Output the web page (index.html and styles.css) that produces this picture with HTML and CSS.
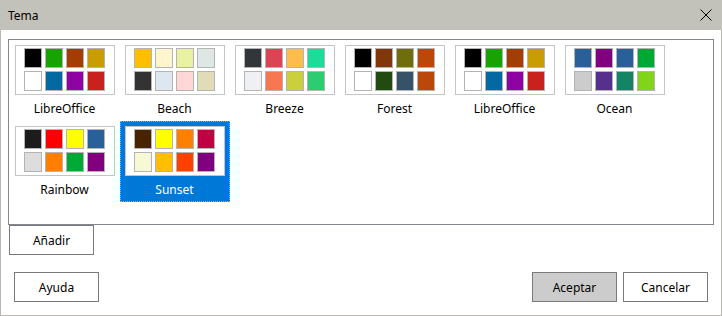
FILE: index.html
```html
<!DOCTYPE html>
<html lang="es">
<head>
    <meta charset="UTF-8">
    <title>Tema</title>
    <link rel="stylesheet" href="styles.css">
</head>
<body>
    <div class="dialog">
        <div class="titlebar">
            <span class="title">Tema</span>
            <svg class="close" width="12" height="12" viewBox="0 0 12 12">
                <path d="M0.5 0.5 L11.5 11.5 M11.5 0.5 L0.5 11.5" stroke="#000" stroke-width="1" fill="none"/>
            </svg>
        </div>

        <div class="content">
            <div class="theme-view">
                <div class="theme">
                    <div class="preview">
                        <span class="sw" style="background:#000000"></span>
                        <span class="sw" style="background:#18a303"></span>
                        <span class="sw" style="background:#a33e03"></span>
                        <span class="sw" style="background:#c99c00"></span>
                        <span class="sw" style="background:#ffffff"></span>
                        <span class="sw" style="background:#0369a3"></span>
                        <span class="sw" style="background:#8e03a3"></span>
                        <span class="sw" style="background:#c9211e"></span>
                    </div>
                    <div class="name">LibreOffice</div>
                </div>
                <div class="theme">
                    <div class="preview">
                        <span class="sw" style="background:#ffbf00"></span>
                        <span class="sw" style="background:#fff5ce"></span>
                        <span class="sw" style="background:#e8f2a1"></span>
                        <span class="sw" style="background:#dee6e6"></span>
                        <span class="sw" style="background:#333333"></span>
                        <span class="sw" style="background:#dee6ef"></span>
                        <span class="sw" style="background:#ffd7d7"></span>
                        <span class="sw" style="background:#e0dcb8"></span>
                    </div>
                    <div class="name">Beach</div>
                </div>
                <div class="theme">
                    <div class="preview">
                        <span class="sw" style="background:#31363b"></span>
                        <span class="sw" style="background:#da4453"></span>
                        <span class="sw" style="background:#fdbc4b"></span>
                        <span class="sw" style="background:#1cdc9a"></span>
                        <span class="sw" style="background:#eff0f1"></span>
                        <span class="sw" style="background:#f67752"></span>
                        <span class="sw" style="background:#c9d03a"></span>
                        <span class="sw" style="background:#2ecc71"></span>
                    </div>
                    <div class="name">Breeze</div>
                </div>
                <div class="theme">
                    <div class="preview">
                        <span class="sw" style="background:#000000"></span>
                        <span class="sw" style="background:#813709"></span>
                        <span class="sw" style="background:#706e0c"></span>
                        <span class="sw" style="background:#bb480a"></span>
                        <span class="sw" style="background:#ffffff"></span>
                        <span class="sw" style="background:#224b12"></span>
                        <span class="sw" style="background:#355269"></span>
                        <span class="sw" style="background:#bb480a"></span>
                    </div>
                    <div class="name">Forest</div>
                </div>
                <div class="theme">
                    <div class="preview">
                        <span class="sw" style="background:#000000"></span>
                        <span class="sw" style="background:#18a303"></span>
                        <span class="sw" style="background:#a33e03"></span>
                        <span class="sw" style="background:#c99c00"></span>
                        <span class="sw" style="background:#ffffff"></span>
                        <span class="sw" style="background:#0369a3"></span>
                        <span class="sw" style="background:#8e03a3"></span>
                        <span class="sw" style="background:#c9211e"></span>
                    </div>
                    <div class="name">LibreOffice</div>
                </div>
                <div class="theme">
                    <div class="preview">
                        <span class="sw" style="background:#2a6099"></span>
                        <span class="sw" style="background:#800080"></span>
                        <span class="sw" style="background:#2a6099"></span>
                        <span class="sw" style="background:#00a933"></span>
                        <span class="sw" style="background:#cccccc"></span>
                        <span class="sw" style="background:#55308d"></span>
                        <span class="sw" style="background:#158466"></span>
                        <span class="sw" style="background:#81d41a"></span>
                    </div>
                    <div class="name">Ocean</div>
                </div>
                <div class="theme">
                    <div class="preview">
                        <span class="sw" style="background:#1c1c1c"></span>
                        <span class="sw" style="background:#ff0000"></span>
                        <span class="sw" style="background:#ffff00"></span>
                        <span class="sw" style="background:#2a6099"></span>
                        <span class="sw" style="background:#dddddd"></span>
                        <span class="sw" style="background:#ff8000"></span>
                        <span class="sw" style="background:#00a933"></span>
                        <span class="sw" style="background:#800080"></span>
                    </div>
                    <div class="name">Rainbow</div>
                </div>
                <div class="theme selected">
                    <div class="preview">
                        <span class="sw" style="background:#472300"></span>
                        <span class="sw" style="background:#ffff00"></span>
                        <span class="sw" style="background:#ff8000"></span>
                        <span class="sw" style="background:#bf0041"></span>
                        <span class="sw" style="background:#f6f9d4"></span>
                        <span class="sw" style="background:#ffbf00"></span>
                        <span class="sw" style="background:#ff4000"></span>
                        <span class="sw" style="background:#800080"></span>
                    </div>
                    <div class="name">Sunset</div>
                </div>
            </div>
            <button class="btn add">Añadir</button>
        </div>

        <div class="footer">
            <button class="btn">Ayuda</button>
            <div class="spacer"></div>
            <button class="btn default">Aceptar</button>
            <button class="btn">Cancelar</button>
        </div>
    </div>
</body>
</html>
```

FILE: styles.css
```css
* {
    box-sizing: border-box;
}
html, body {
    margin: 0;
    padding: 0;
    background: #ffffff;
}
body {
    font-family: "Noto Sans", "DejaVu Sans", sans-serif;
    font-size: 12px;
    color: #000;
}
.dialog {
    width: 722px;
    height: 316px;
    border: 1px solid #b9b8b0;
    border-top: none;
    background: #ffffff;
    display: flex;
    flex-direction: column;
}
.titlebar {
    height: 30px;
    background: #c2c1ba;
    display: flex;
    align-items: center;
    padding: 0 9px 0 8px;
    margin: 0 -1px;
}
.title {
    flex: 1;
    font-size: 12px;
}
.close {
    display: block;
    margin-right: 1px;
}
.content {
    padding: 9px 7px 0 7px;
}
.theme-view {
    height: 186px;
    border: 1px solid #828790;
    padding: 0 0 0 1px;
    display: flex;
    flex-wrap: wrap;
    align-content: flex-start;
}
.theme {
    width: 110px;
    height: 81px;
    padding: 5px 5px 0 5px;
    border: 1px solid transparent;
}
.theme.selected {
    background: #0078d7;
    border: 1px dotted #f29a3a;
    color: #ffffff;
}
.preview {
    width: 100px;
    height: 50px;
    margin: -1px 0 0 -1px;
    border: 1px solid #c4c4c4;
    background: #ffffff;
    display: grid;
    grid-template-columns: repeat(4, 18px);
    grid-template-rows: repeat(2, 20px);
    gap: 3px;
    justify-content: center;
    align-content: center;
    padding: 0 1px 1px 0;
}
.sw {
    display: block;
    border: 1px solid #b4b4b4;
}
.name {
    text-align: center;
    margin-top: 6px;
    line-height: 16px;
    margin-left: -1px;
}
.btn {
    font-family: "Noto Sans", "DejaVu Sans", sans-serif;
    font-size: 12px;
    color: #000;
    width: 85px;
    height: 30px;
    background: #ffffff;
    border: 1px solid #7a7a7a;
    padding: 0;
    border-radius: 0;
}
.btn.add {
    display: block;
    margin-left: 1px;
    margin-top: 0;
    height: 30px;
}
.btn.default {
    background: #cccccc;
    margin-right: 6px;
}
.footer {
    display: flex;
    padding: 17px 13px 0 13px;
}
.spacer {
    flex: 1;
}
```
